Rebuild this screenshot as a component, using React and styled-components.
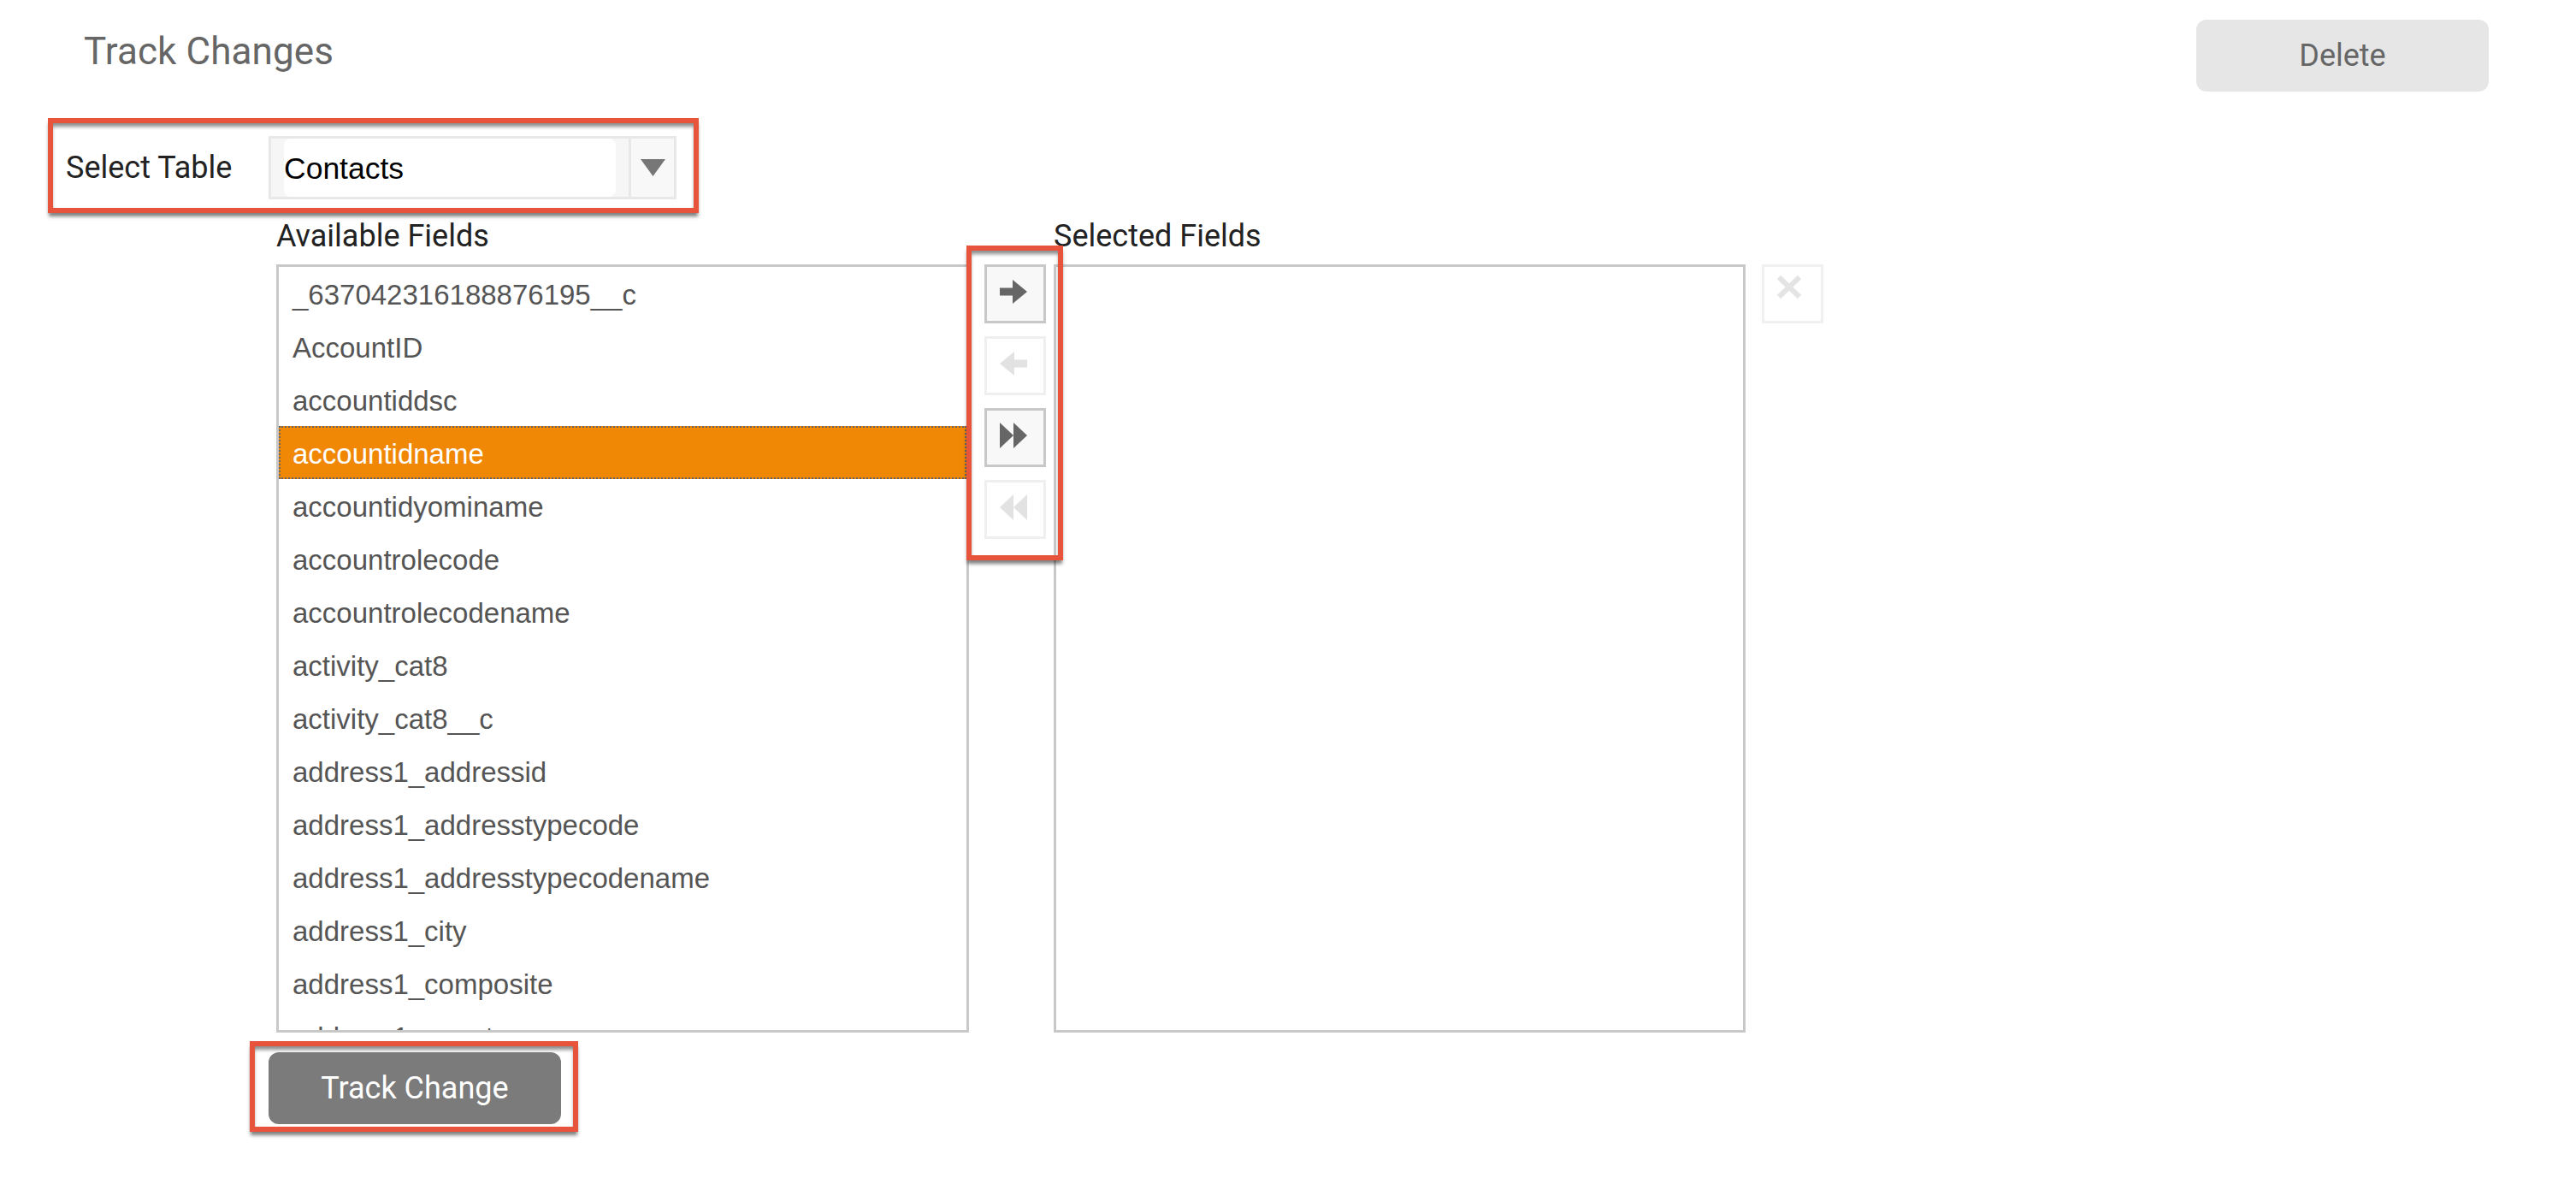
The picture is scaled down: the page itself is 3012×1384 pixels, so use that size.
import React from "react";
import styled, { createGlobalStyle } from "styled-components";

const GlobalStyle = createGlobalStyle`
  body {
    margin: 0;
    background: #ffffff;
    font-family: Roboto, "Liberation Sans", sans-serif;
  }
`;

const red = "#e8533c";
const callout = `
  box-sizing: border-box;
  border: 6px solid ${red};
  box-shadow: 0 5px 4px -1px rgba(0, 0, 0, 0.5), inset 0 5px 4px -1px rgba(0, 0, 0, 0.45);
`;

const Page = styled.div`
  width: 3012px;
  min-height: 1384px;
`;

const Header = styled.header`
  display: flex;
  justify-content: space-between;
  align-items: flex-start;
  padding: 23px 102px 0 98px;
`;

const Title = styled.h1`
  margin: 11px 0 0;
  font-family: Roboto, sans-serif;
  font-weight: 400;
  font-size: 44px;
  line-height: 52px;
  letter-spacing: 0.1px;
  color: #666666;
`;

const GreyButton = styled.button`
  width: 342px;
  height: 84px;
  border: none;
  border-radius: 12px;
  font-family: Roboto, sans-serif;
  font-size: 36px;
  background: ${(p) => (p.$dark ? "#7b7b7b" : "#e6e6e6")};
  color: ${(p) => (p.$dark ? "#ffffff" : "#666666")};
  padding: 0;
`;

const TableRow = styled.div`
  ${callout}
  display: flex;
  align-items: center;
  width: 761px;
  height: 111px;
  margin: 31px 0 0 56px;
  padding: 15px 20px 10px 15px;
`;

const Label = styled.span`
  font-family: Roboto, sans-serif;
  font-size: 36px;
  line-height: 42px;
  color: #222222;
  width: ${(p) => p.$width || "auto"};
  flex-shrink: 0;
`;

const Select = styled.div`
  box-sizing: border-box;
  display: flex;
  width: 477px;
  height: 74px;
  border: 3px solid #e8e8e8;
  background: #f6f6f6;
`;

const SelectValue = styled.div`
  flex: 1;
  display: flex;
  align-items: center;
  padding-top: 3px;
  margin: 0 15px;
  background: #ffffff;
  border-radius: 8px;
  font-family: "Liberation Sans", Arial, sans-serif;
  font-size: 35.5px;
  color: #000000;
`;

const SelectToggle = styled.div`
  width: 50px;
  display: flex;
  align-items: center;
  justify-content: center;
  border-left: 3px solid #e8e8e8;
  background: #f8f8f8;
  svg {
    filter: blur(0.7px);
  }
`;

const Fields = styled.div`
  display: grid;
  grid-template-columns: 810px 99px 809px 19px 72px;
  grid-template-rows: 54px 898px;
  margin: 6px 0 0 323px;
`;

const FieldList = styled.div`
  grid-row: 2;
  grid-column: ${(p) => p.$col};
  box-sizing: border-box;
  border: 3px solid #c8c8c8;
  overflow: hidden;
`;

const Row = styled.div`
  box-sizing: border-box;
  height: 62px;
  display: flex;
  align-items: center;
  padding: 4px 0 0 14px;
  border: 2px dotted ${(p) => (p.$selected ? "#666666" : "transparent")};
  background: ${(p) => (p.$selected ? "#f08705" : "transparent")};
  color: ${(p) => (p.$selected ? "#ffffff" : "#555555")};
  font-family: "Liberation Sans", Arial, sans-serif;
  font-size: 33px;
  white-space: nowrap;
`;

const Mover = styled.div`
  grid-row: 2;
  grid-column: 2;
  align-self: start;
  position: relative;
  display: flex;
  flex-direction: column;
  gap: 15px;
  padding-left: 18px;

  &::after {
    content: "";
    position: absolute;
    left: -3px;
    right: -11px;
    top: -22px;
    bottom: -25px;
    ${callout}
    pointer-events: none;
  }
`;

const MoveButton = styled.button`
  box-sizing: border-box;
  width: 72px;
  height: 69px;
  display: flex;
  align-items: center;
  justify-content: center;
  padding: 0 4px 6px 0;
  border: 3px solid ${(p) => (p.$disabled ? "#efefef" : "#c8c8c8")};
  background: ${(p) => (p.$disabled ? "#ffffff" : "#f8f8f8")};
  color: ${(p) => (p.$disabled ? "#e2e2e2" : "#666666")};
  svg {
    filter: blur(0.5px);
  }
`;

const ClearButton = styled(MoveButton)`
  grid-row: 2;
  grid-column: 5;
  align-self: start;
  padding: 0 8px 16px 0;
  border-color: #f0f0f0;
  background: #ffffff;
  color: #e4e4e4;
`;

const TrackWrap = styled.div`
  ${callout}
  display: inline-block;
  margin: 10px 0 0 292px;
  padding: 7px 14px 3px 16px;
`;

const ArrowRight = ({ flip }) => (
  <svg width="32" height="28" viewBox="0 0 32 28" style={flip ? { transform: "scaleX(-1)" } : undefined}>
    <polygon points="0,9.5 15,9.5 15,0 32,14 15,28 15,18.5 0,18.5" fill="currentColor" />
  </svg>
);

const DoubleRight = ({ flip }) => (
  <svg width="32" height="30" viewBox="0 0 32 30" style={flip ? { transform: "scaleX(-1)" } : undefined}>
    <polygon points="0,0 16,15 0,30" fill="currentColor" />
    <polygon points="16,0 32,15 16,30" fill="currentColor" />
  </svg>
);

const available = [
  "_637042316188876195__c",
  "AccountID",
  "accountiddsc",
  "accountidname",
  "accountidyominame",
  "accountrolecode",
  "accountrolecodename",
  "activity_cat8",
  "activity_cat8__c",
  "address1_addressid",
  "address1_addresstypecode",
  "address1_addresstypecodename",
  "address1_city",
  "address1_composite",
  "address1_country",
  "address1_county",
];

export default function App() {
  return (
    <Page>
      <GlobalStyle />
      <Header>
        <Title>Track Changes</Title>
        <GreyButton>Delete</GreyButton>
      </Header>

      <TableRow>
        <Label $width="237px">Select Table</Label>
        <Select>
          <SelectValue>Contacts</SelectValue>
          <SelectToggle>
            <svg width="29" height="22" viewBox="0 0 29 22">
              <polygon points="0,1 29,1 14.5,21" fill="#777777" />
            </svg>
          </SelectToggle>
        </Select>
      </TableRow>

      <Fields>
        <Label style={{ gridColumn: 1 }}>Available Fields</Label>
        <Label style={{ gridColumn: 3 }}>Selected Fields</Label>
        <FieldList $col={1}>
          {available.map((name) => (
            <Row key={name} $selected={name === "accountidname"}>
              {name}
            </Row>
          ))}
        </FieldList>
        <Mover>
          <MoveButton>
            <ArrowRight />
          </MoveButton>
          <MoveButton $disabled>
            <ArrowRight flip />
          </MoveButton>
          <MoveButton>
            <DoubleRight />
          </MoveButton>
          <MoveButton $disabled>
            <DoubleRight flip />
          </MoveButton>
        </Mover>
        <FieldList $col={3} />
        <ClearButton $disabled>
          <svg width="30" height="29" viewBox="0 0 30 29">
            <path d="M3 3 L27 26 M27 3 L3 26" stroke="currentColor" strokeWidth="6" />
          </svg>
        </ClearButton>
      </Fields>

      <TrackWrap>
        <GreyButton $dark>Track Change</GreyButton>
      </TrackWrap>
    </Page>
  );
}
